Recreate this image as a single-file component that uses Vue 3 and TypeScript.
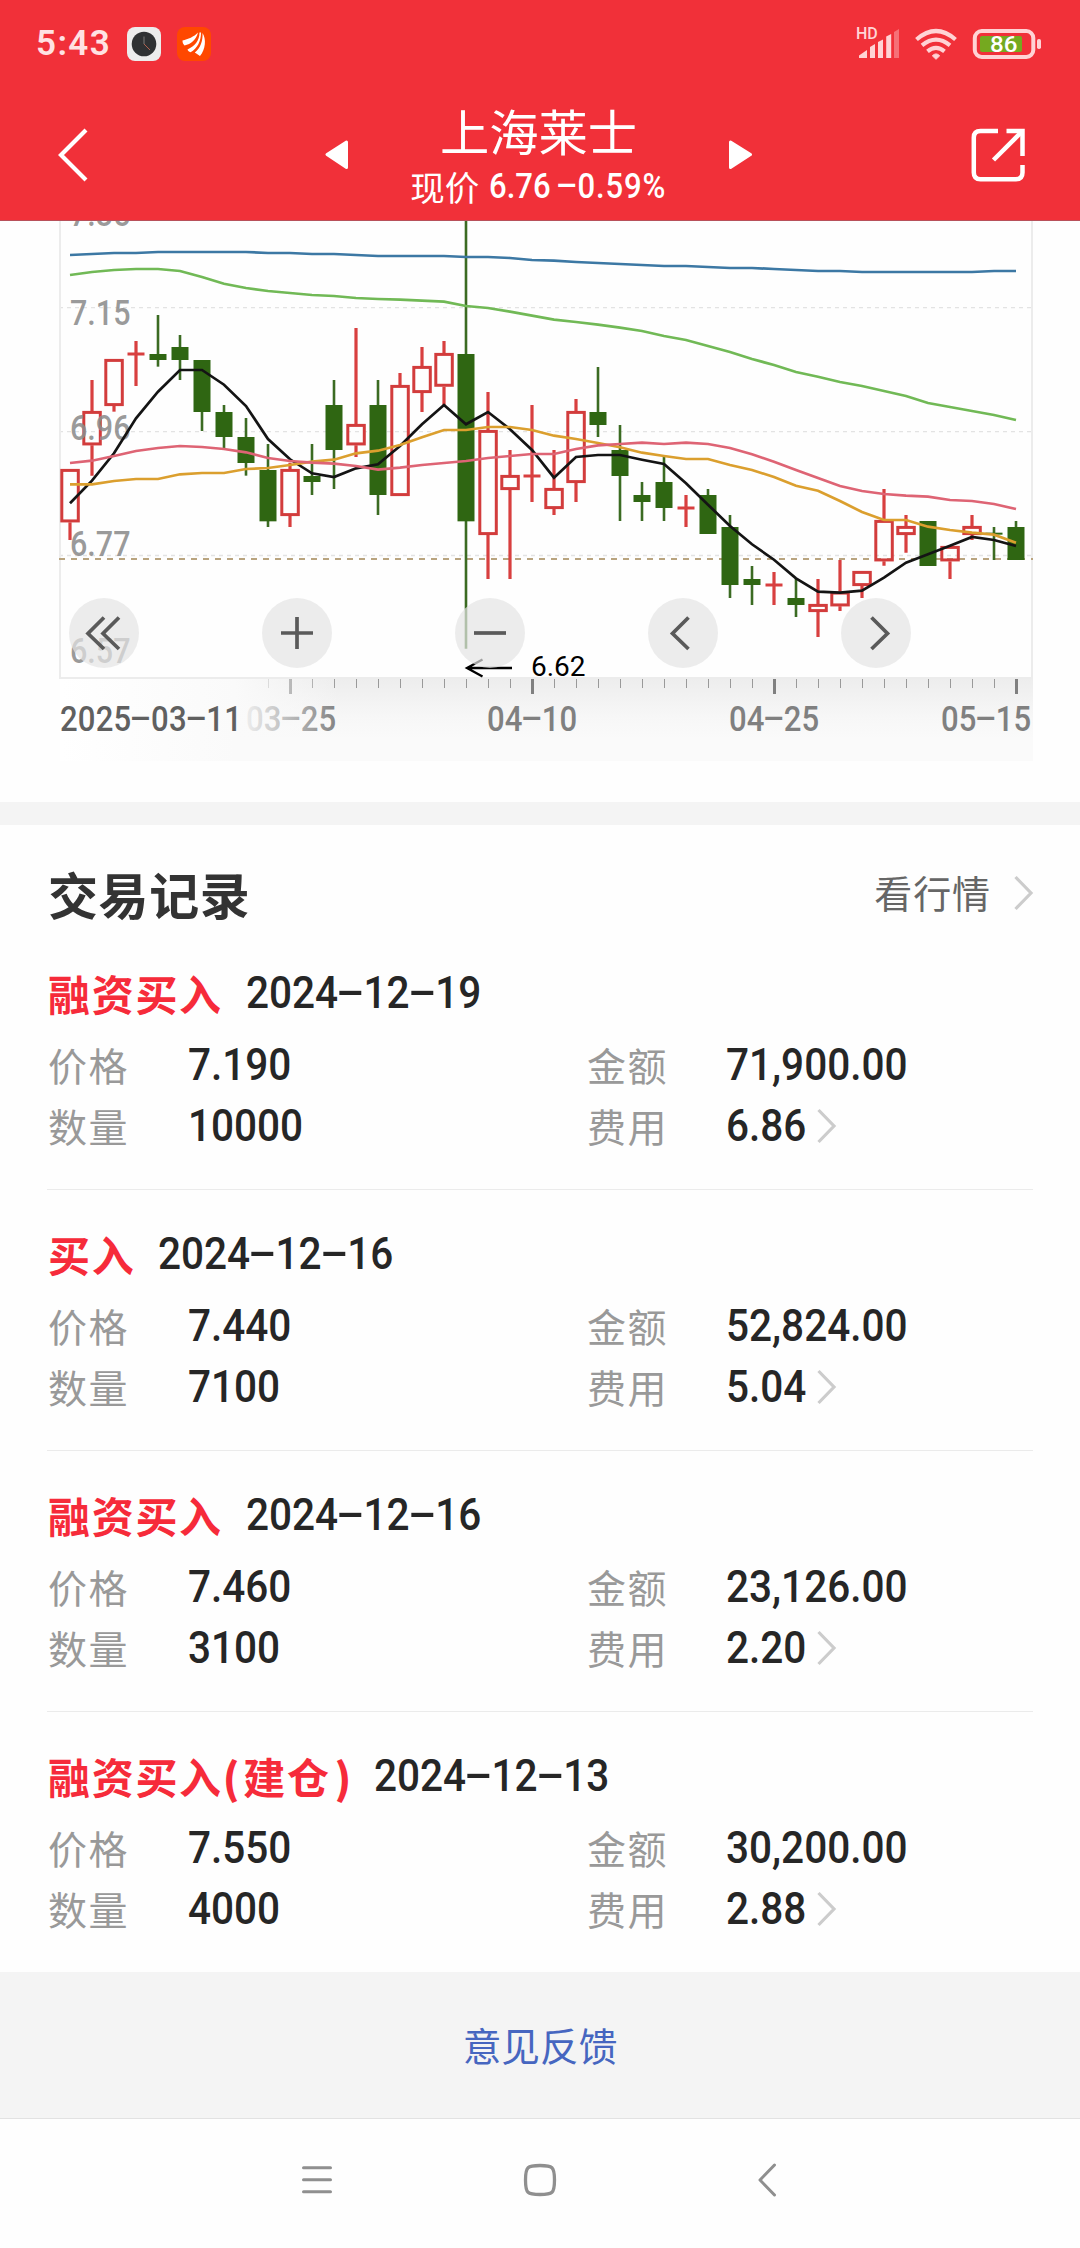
<script setup lang="ts">
import { h } from 'vue'

/* Condensed figures: the glyphs are narrowed and the box is shrunk by the same share. */
const SQUEEZE = 0.9
const advance = (c: string): number =>
  c === '-' ? 0.63 : c === '.' ? 0.28 : c === ',' ? 0.22 : c === ' ' ? 0.25 : c === '%' ? 0.74 : 0.568

const Num = (props: { v: string }) => {
  const width = [...props.v].reduce((sum, c) => sum + advance(c), 0)
  return h(
    'span',
    { class: 'num', style: { marginRight: `${(-(1 - SQUEEZE) * width).toFixed(3)}em` } },
    [...props.v].map((c) => (c === '-' ? h('i', { class: 'dash' }, '-') : c)),
  )
}
Num.props = ['v']

/* Chart units: three per pixel, counted from y = 210. */
const px = (i: number): number => 70 + 22 * i
const py = (v: number): number => 210 + v / 3

type Candle = [kind: 'r' | 'g', high: number, top: number, bottom: number, low: number]
const candles: Candle[] = [
  ['r', 777, 777, 937, 990], ['r', 510, 603, 706, 797], ['r', 447, 447, 588, 605], ['r', 393, 432, 432, 528],
  ['g', 315, 432, 450, 470], ['g', 375, 411, 450, 510], ['g', 450, 450, 606, 663], ['g', 585, 606, 681, 714],
  ['g', 624, 681, 759, 797], ['g', 702, 780, 934, 951], ['r', 758, 777, 918, 951], ['g', 702, 798, 816, 855],
  ['g', 510, 585, 720, 837], ['r', 354, 642, 706, 741], ['g', 510, 585, 855, 915], ['r', 489, 525, 858, 858],
  ['r', 411, 468, 549, 606], ['r', 393, 429, 530, 585], ['g', 0, 432, 934, 1316], ['r', 546, 660, 975, 1107],
  ['r', 720, 795, 840, 1107], ['r', 585, 798, 798, 876], ['r', 720, 834, 897, 915], ['r', 567, 603, 819, 876],
  ['g', 471, 606, 645, 681], ['g', 645, 720, 798, 933], ['g', 816, 855, 876, 933], ['g', 741, 816, 894, 933],
  ['r', 855, 894, 894, 951], ['g', 837, 855, 972, 972], ['g', 915, 951, 1125, 1164], ['g', 1068, 1107, 1125, 1185],
  ['r', 1086, 1125, 1125, 1185], ['g', 1107, 1164, 1185, 1221], ['r', 1107, 1182, 1206, 1281], ['r', 1050, 1145, 1189, 1203],
  ['r', 1083, 1083, 1128, 1164], ['r', 837, 930, 1054, 1067], ['r', 915, 948, 975, 1028], ['g', 933, 933, 1068, 1068],
  ['r', 1008, 1008, 1054, 1107], ['r', 915, 948, 975, 990], ['g', 951, 971, 971, 1050], ['g', 933, 951, 1050, 1050],
]

const averages: { color: string; values: number[] }[] = [
  { color: '#3c78a4', values: [135, 132, 129, 129, 126, 126, 126, 126, 126, 129, 129, 132, 132, 135, 138, 138, 138, 138, 141, 141, 144, 150, 152, 156, 159, 162, 165, 168, 168, 171, 174, 174, 177, 180, 183, 183, 186, 186, 186, 186, 186, 186, 183, 183] },
  { color: '#71b956', values: [195, 186, 180, 177, 177, 183, 201, 221, 234, 243, 249, 255, 258, 264, 267, 269, 272, 275, 288, 294, 305, 317, 329, 336, 344, 353, 363, 378, 390, 408, 426, 447, 465, 486, 500, 516, 528, 543, 558, 579, 591, 603, 615, 630] },
  { color: '#141414', values: [880, 812, 730, 625, 545, 480, 480, 524, 588, 687, 748, 790, 801, 775, 763, 708, 643, 585, 643, 606, 658, 720, 803, 741, 735, 735, 749, 762, 820, 884, 948, 1003, 1049, 1105, 1145, 1148, 1142, 1103, 1058, 1033, 1007, 981, 990, 1008] },
  { color: '#db9f2e', values: [823, 823, 813, 807, 807, 793, 789, 789, 777, 774, 765, 755, 749, 730, 722, 705, 682, 660, 660, 651, 651, 660, 677, 687, 699, 712, 728, 738, 747, 747, 765, 780, 801, 827, 842, 873, 906, 930, 930, 950, 960, 968, 974, 998] },
  { color: '#de6474', values: [759, 752, 738, 723, 714, 708, 711, 717, 727, 744, 753, 758, 761, 768, 779, 773, 765, 759, 753, 744, 738, 732, 732, 717, 706, 702, 698, 702, 698, 702, 714, 733, 755, 780, 804, 828, 843, 852, 857, 860, 870, 873, 882, 897] },
]
const points = (values: number[]): string => values.map((v, i) => `${px(i)},${py(v).toFixed(1)}`).join(' ')

const priceLabels = [
  { text: '7.35', y: 225.5 }, { text: '7.15', y: 325 }, { text: '6.96', y: 440 },
  { text: '6.77', y: 556 }, { text: '6.57', y: 663 },
]
const ticks = Array.from({ length: 35 }, (_, k) => k + 9)
const isMajor = (i: number): boolean => (i - 10) % 11 === 0
const dates = [
  { text: '03-25', x: 186 }, { text: '04-10', x: 427 }, { text: '04-25', x: 669 }, { text: '05-15', x: 881 },
]
const buttons = [
  { x: 104, d: 'M0 -15.5L-16 .5L0 16M15 -15.5L-1 .5L15 16' },
  { x: 297, d: 'M-16 0H16M0 -16V16' },
  { x: 490, d: 'M-16 0H16' },
  { x: 683, d: 'M5.5 -15.5L-10.5 .5L5.5 16' },
  { x: 876, d: 'M-4.5 -15.5L11.5 .5L-4.5 16' },
]

interface Trade { kind: string; opening?: string; date: string; price: string; amount: string; count: string; fee: string }
const trades: Trade[] = [
  { kind: '融资买入', date: '2024-12-19', price: '7.190', amount: '71,900.00', count: '10000', fee: '6.86' },
  { kind: '买入', date: '2024-12-16', price: '7.440', amount: '52,824.00', count: '7100', fee: '5.04' },
  { kind: '融资买入', date: '2024-12-16', price: '7.460', amount: '23,126.00', count: '3100', fee: '2.20' },
  { kind: '融资买入', opening: '建仓', date: '2024-12-13', price: '7.550', amount: '30,200.00', count: '4000', fee: '2.88' },
]
</script>

<template>
  <div class="page">
    <header class="top">
      <div class="status">
        <span class="clock">5:43</span>
        <svg class="app-icon" width="34" height="34" viewBox="0 0 34 34">
          <rect width="34" height="34" rx="8" fill="#ececec" />
          <circle cx="17" cy="17" r="12.3" fill="#2f3133" />
          <path d="M17 17V9.5" stroke="#555" stroke-width="2" />
          <path d="M17 17L23 23" stroke="#b0604e" stroke-width="1" />
        </svg>
        <svg class="app-icon second" width="34" height="34" viewBox="0 0 34 34">
          <rect width="34" height="34" rx="8" fill="#ff4800" />
          <path d="M5.5 13.5C11 12 17 10 21 5.5C19 13 14 17 7.500 18.500C6 17 5.500 15.500 5.500 13.500Z" fill="#fff" />
          <path d="M22.500 5.500C22.500 13.500 18 19 10.500 22.500C11 24 12 24.700 13.500 25.300C20.500 21.500 24 14 24 5.500Z" fill="#fff" />
          <path d="M25.500 6C26 14 23.500 21 17.800 25.500L23 29C28.500 22.500 29.500 12 25.500 6Z" fill="#fff" />
        </svg>
        <svg class="signals" width="190" height="48" viewBox="854 20 190 48">
          <text x="856" y="39.300" class="hd">HD</text>
          <g fill="#ffd3d5">
            <path d="M859 58V55.500L867 50V58Z" />
            <path d="M870 58V47L875 44V58Z" />
            <path d="M878 58V42L883 39.500V58Z" />
            <path d="M886.200 58V36.500L891.200 34V58Z" />
            <path d="M894 58V32L899 29V58Z" opacity=".4" />
          </g>
          <g fill="none" stroke="#ffd3d5" stroke-width="4.200">
            <path d="M916.500 39.500Q936 22.500 955.500 39.500" />
            <path d="M922 45.300Q936 34 950 45.300" />
            <path d="M927.500 51.300Q936 44.500 944.500 51.300" />
          </g>
          <path d="M936 59.300L932.300 55.800Q936 52 939.700 55.800Z" fill="#ffd3d5" stroke="#ffd3d5" stroke-width="1" stroke-linejoin="round" />
          <rect x="974.800" y="31" width="58.500" height="26" rx="7" fill="none" stroke="#ffd3d5" stroke-width="4" />
          <rect x="980" y="36" width="42" height="16" rx="2" fill="#75a91f" />
          <rect x="1037" y="39" width="4" height="10" rx="1.800" fill="#ffd3d5" />
          <text x="990" y="52" class="level" textLength="27.500" lengthAdjust="spacingAndGlyphs">86</text>
        </svg>
      </div>
      <div class="bar">
        <svg class="back" width="30" height="54" viewBox="58 128 30 54">
          <path d="M86 130L61 155L86 180" fill="none" stroke="#fff" stroke-width="4.200" />
        </svg>
        <svg class="prev" width="24" height="30" viewBox="326 140 24 30">
          <path d="M328 154.500L347.500 142V167.500Z" fill="#fff" stroke="#fff" stroke-width="3" stroke-linejoin="round" />
        </svg>
        <div class="heading">
          <h1>上海莱士</h1>
          <p><span class="caption">现价</span><Num v="6.76" class="quote" /><Num v="-0.59%" class="change" /></p>
        </div>
        <svg class="next" width="24" height="30" viewBox="728 140 24 30">
          <path d="M750.500 154.500L730.500 142V167.500Z" fill="#fff" stroke="#fff" stroke-width="3" stroke-linejoin="round" />
        </svg>
        <svg class="share" width="56" height="56" viewBox="970 127 56 56">
          <g fill="none" stroke="#fff" stroke-width="4.500">
            <path d="M998 131H980.500Q973.800 131 973.800 137.500V172.500Q973.800 179.200 980.500 179.200H1016Q1022.500 179.200 1022.500 172.500V165" />
            <path d="M1006.500 131H1022.500V156" />
            <path d="M993.500 160L1022 131.500" />
          </g>
        </svg>
      </div>
    </header>

    <section class="chart">
      <svg class="plot" width="1080" height="469" viewBox="0 221 1080 469">
        <g stroke="#e3e3e3" stroke-width="1.300" stroke-dasharray="4 4">
          <path d="M59 307.700H1032M59 431.700H1032M59 555.500H1032" />
        </g>
        <path d="M60 221V678H1032V221" fill="none" stroke="#ececec" stroke-width="2" />
        <path d="M59 559H1033" stroke="#b9a47f" stroke-width="2" stroke-dasharray="6 6" />
        <g v-for="(c, i) in candles" :key="i">
          <template v-if="c[0] === 'g'">
            <path :d="`M${px(i)} ${py(c[1])}V${py(c[4])}`" stroke="#3b6b22" stroke-width="2.600" />
            <rect :x="px(i) - 8.500" :y="py(c[2]) - (c[3] === c[2] ? 1 : 0)" width="17" :height="Math.max(2, (c[3] - c[2]) / 3)" fill="#2f6612" />
          </template>
          <template v-else>
            <path
              :d="`M${px(i)} ${py(c[1])}V${py(c[2])}M${px(i)} ${py(c[3])}V${py(c[4])}`"
              stroke="#d83f3f" stroke-width="3.200"
            />
            <path v-if="c[2] === c[3]" :d="`M${px(i) - 8.500} ${py(c[2])}h17`" stroke="#d83f3f" stroke-width="3" />
            <rect
              v-else :x="px(i) - 8.200" :y="py(c[2]) + 1.400" width="16.500" :height="(c[3] - c[2]) / 3 - 2.800"
              fill="none" stroke="#d23c3c" stroke-width="3"
            />
          </template>
        </g>
        <text
          v-for="l in priceLabels" :key="l.text" x="70" :y="l.y" class="price"
          textLength="60.500" lengthAdjust="spacingAndGlyphs"
        >{{ l.text }}</text>
        <polyline
          v-for="a in averages" :key="a.color" :points="points(a.values)"
          fill="none" :stroke="a.color" stroke-width="2.700"
        />
        <path d="M512 668H467M482.500 659.500L467 668L482.500 676.500" fill="none" stroke="#000" stroke-width="2.300" />
        <text x="531" y="675.700" class="lowest">6.62</text>
        <g v-for="b in buttons" :key="b.x" :transform="`translate(${b.x} 633)`">
          <circle r="35" fill="#e4e4e4" fill-opacity=".7" />
          <path :d="b.d" fill="none" stroke="#5a5a5a" stroke-width="3.700" />
        </g>
      </svg>
      <div class="axis">
        <svg class="ticks" width="973" height="20" viewBox="60 679 973 20">
          <path
            v-for="i in ticks" :key="i" :d="`M${px(i) + 0.5} 679V${isMajor(i) ? 694 : 688}`"
            :stroke="isMajor(i) ? '#808080' : '#999'" :stroke-width="isMajor(i) ? 3 : 1"
          />
        </svg>
        <span v-for="d in dates" :key="d.text" class="date" :style="{ left: `${d.x}px` }"><Num :v="d.text" /></span>
        <div class="fade" />
        <span class="date first"><Num v="2025-03-11" /></span>
      </div>
    </section>

    <main class="records">
      <div class="records-head">
        <h2>交易记录</h2>
        <span class="more">看行情</span>
        <svg width="20" height="36" viewBox="0 0 20 36"><path d="M1.500 2L17 18L1.500 34" fill="none" stroke="#ccc" stroke-width="3.200" /></svg>
      </div>
      <article v-for="(t, i) in trades" :key="i" class="trade">
        <div class="trade-head">
          <span class="kind">{{ t.kind }}<template v-if="t.opening"><b class="paren left">(</b>{{ t.opening }}<b class="paren right">)</b></template></span>
          <Num :v="t.date" />
        </div>
        <div class="row">
          <span class="label">价格</span><div class="value"><Num :v="t.price" /></div>
          <span class="label">金额</span><div class="value"><Num :v="t.amount" /></div>
        </div>
        <div class="row">
          <span class="label">数量</span><div class="value"><Num :v="t.count" /></div>
          <span class="label">费用</span>
          <div class="value">
            <Num :v="t.fee" />
            <svg class="go" width="20" height="36" viewBox="0 0 20 36"><path d="M1.500 2L17 18L1.500 34" fill="none" stroke="#ccc" stroke-width="3.200" /></svg>
          </div>
        </div>
      </article>
    </main>

    <footer class="feedback">意见反馈</footer>

    <nav class="system">
      <svg width="32" height="36" viewBox="301 2162 32 36">
        <path d="M303.500 2167.700H330.500M303.500 2179.700H330.500M303.500 2191.700H330.500" stroke="#8f8f8f" stroke-width="3" stroke-linecap="round" />
      </svg>
      <svg class="home" width="36" height="36" viewBox="522 2162 36 36">
        <path d="M540 2165.500C552.500 2165.500 554.500 2166.500 554.500 2180C554.500 2193.500 552.500 2194.500 540 2194.500C527.500 2194.500 525.500 2193.500 525.500 2180C525.500 2166.500 527.500 2165.500 540 2165.500Z" fill="none" stroke="#8f8f8f" stroke-width="3.300" />
      </svg>
      <svg width="20" height="36" viewBox="757 2162 20 36">
        <path d="M774.500 2165L760 2180L774.500 2195" fill="none" stroke="#8f8f8f" stroke-width="3" stroke-linecap="round" stroke-linejoin="round" />
      </svg>
    </nav>
  </div>
</template>

<style>
body {
  margin: 0;
  background: #fff;
}
.num {
  display: inline-block;
  font-family: Roboto, sans-serif;
  font-weight: 500;
  white-space: nowrap;
  transform: scaleX(0.9);
  transform-origin: left center;
}
.num .dash {
  display: inline-block;
  width: 0.63em;
  font-style: normal;
  text-align: center;
  transform: translateY(-0.05em) scaleX(2.1);
}
</style>

<style scoped>
.page {
  width: 1080px;
  height: 2248px;
  overflow: hidden;
  background: #fefefe;
  font-family: "Noto Sans CJK SC", sans-serif;
}
.page svg {
  display: block;
  flex: none;
}
.top {
  box-sizing: border-box;
  height: 221px;
  background: #f13039;
  border-bottom: 1px solid #b8505a;
  color: #fff;
}
.status {
  display: flex;
  align-items: center;
  height: 88px;
  padding: 0 36px;
}
.clock {
  width: 91px;
  font: 600 35px/40px Roboto, sans-serif;
  letter-spacing: 1.400px;
  color: #ffe2e3;
}
.second {
  margin-left: 16px;
}
.signals {
  margin-left: auto;
}
.hd {
  font: 500 16px Roboto, sans-serif;
  fill: #ffd3d5;
}
.level {
  font: 500 22.500px Roboto, sans-serif;
  fill: #fff;
}
.bar {
  display: flex;
  align-items: center;
  height: 132px;
  padding: 0 54px 0 58px;
}
.page .back,
.page .prev,
.page .next,
.page .share {
  position: relative;
  top: 1px;
}
.page .prev {
  margin-left: 237px;
}
.heading {
  width: 379px;
  text-align: center;
}
.heading h1 {
  margin: -2px 0 0;
  font-size: 49.300px;
  font-weight: 400;
  line-height: 66px;
}
.heading p {
  display: flex;
  justify-content: center;
  margin: 0;
  font-size: 34.500px;
  line-height: 46px;
}
.caption {
  margin-right: 10px;
}
.quote {
  width: 76px;
  text-align: left;
}
.change {
  letter-spacing: 0.900px;
}
.share {
  margin-left: auto;
}
.chart {
  height: 581px;
}
.price {
  font: 500 35px Roboto, sans-serif;
  fill: #8c8c8c;
  fill-opacity: 0.88;
}
.lowest {
  font: 400 28px Roboto, sans-serif;
}
.plot {
  position: relative;
}
.axis {
  position: relative;
  width: 973px;
  height: 82px;
  margin: -11px 0 0 60px;
  background: linear-gradient(#ededed, #f7f7f7 38px, #fafafa 60px);
}
.fade {
  position: absolute;
  inset: 0 auto 0 0;
  width: 280px;
  background: linear-gradient(to right, #fff 0, #fafafa 175px, rgba(250, 250, 250, 0) 280px);
}
.date {
  position: absolute;
  top: 15px;
  left: 0;
  font-size: 34.500px;
  line-height: 44px;
  color: #808080;
}
.date.first {
  letter-spacing: 0.250px;
  color: #606060;
}
.records {
  height: 1147px;
  border-top: 23px solid #f4f4f4;
}
.records-head {
  display: flex;
  align-items: center;
  height: 66px;
  padding: 35px 46px 3px 48px;
}
.records-head h2 {
  margin: 0 auto 0 0;
  font-size: 50px;
  font-weight: 700;
  line-height: 66px;
  letter-spacing: 0.600px;
  color: #333;
}
.more {
  margin: -3px 23px 0 0;
  font-size: 38px;
  letter-spacing: 0.900px;
  color: #666;
}
.trade {
  box-sizing: border-box;
  height: 261px;
  margin: 0 47px;
  padding: 33px 0 0 1px;
  border-bottom: 1px solid #ebebeb;
}
.trade:last-child {
  border-bottom: 0;
}
.trade-head {
  display: flex;
  align-items: center;
  height: 61px;
  margin-bottom: 11px;
  font-size: 45px;
  line-height: 61px;
  color: #262626;
}
.kind {
  margin-right: 23px;
  font-size: 42px;
  font-weight: 700;
  letter-spacing: 1.700px;
  color: #f62b3a;
}
.paren {
  display: inline-block;
  width: 20.500px;
  letter-spacing: 0;
}
.right {
  text-align: right;
}
.row {
  display: grid;
  grid-template-columns: 139.500px 399.500px 139px 1fr;
  align-items: center;
  height: 61px;
  line-height: 61px;
}
.label {
  font-size: 39px;
  letter-spacing: 1.500px;
  color: #999;
}
.value {
  display: flex;
  align-items: center;
  font-size: 45px;
  color: #262626;
}
.go {
  margin-left: 11px;
}
.feedback {
  height: 146px;
  background: #f4f4f4;
  font-size: 38.700px;
  line-height: 144px;
  text-align: center;
  color: #4666c0;
}
.system {
  box-sizing: border-box;
  display: flex;
  align-items: center;
  height: 123px;
  padding: 0 0 0 301px;
  border-top: 1px solid #e2e2e2;
}
.page .home {
  margin: 0 199px 0 189px;
}
</style>
